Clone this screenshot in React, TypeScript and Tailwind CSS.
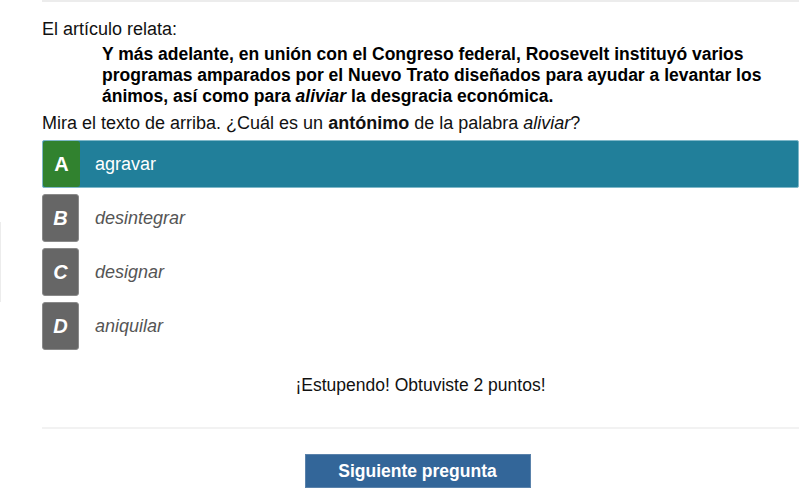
const options = [
  { letter: "A", text: "agravar", selected: true },
  { letter: "B", text: "desintegrar", selected: false },
  { letter: "C", text: "designar", selected: false },
  { letter: "D", text: "aniquilar", selected: false },
];

function Option({
  letter,
  text,
  selected,
}: {
  letter: string;
  text: string;
  selected: boolean;
}) {
  if (selected) {
    return (
      <div className="flex h-[48px] items-stretch rounded-[2px] border border-[#7fb8c9] bg-[#217f9a]">
        <div className="flex w-[37px] items-center justify-center rounded-[3px] bg-[#31822f] text-[20px] font-bold text-white">
          {letter}
        </div>
        <div className="flex items-center pl-[15px] text-[18px] text-white">
          {text}
        </div>
      </div>
    );
  }

  return (
    <div className="flex h-[48px] items-stretch">
      <div className="flex w-[37px] items-center justify-center rounded-[3px] border border-[#8a8a8a] bg-[#666666] text-[20px] font-bold italic text-white">
        {letter}
      </div>
      <div className="flex items-center pl-[16px] text-[18px] italic text-[#555555]">
        {text}
      </div>
    </div>
  );
}

export default function App() {
  return (
    <div className="relative h-[493px] w-[806px] overflow-hidden bg-white font-['Liberation_Sans',Arial,sans-serif] text-[#111111]">
      <div className="absolute left-0 top-[222px] h-[80px] w-px bg-[#ececec]" />

      <div className="ml-[42px] w-[757px]">
        <div className="h-[2px] bg-[#ececec]" />

        <p className="mt-[17px] text-[18px] leading-[20px]">
          El artículo relata:
        </p>

        <blockquote className="ml-[60px] mt-[5px] text-[17.5px] font-bold leading-[21px] text-black">
          Y más adelante, en unión con el Congreso federal, Roosevelt
          instituyó varios programas amparados por el Nuevo Trato diseñados
          para ayudar a levantar los ánimos, así como para{" "}
          <em>aliviar</em> la desgracia económica.
        </blockquote>

        <p className="mt-[6px] text-[18px] leading-[20px]">
          Mira el texto de arriba. ¿Cuál es un <b>antónimo</b> de la palabra{" "}
          <em>aliviar</em>?
        </p>

        <div className="mt-[7px] flex flex-col gap-[6px]">
          {options.map((o) => (
            <Option key={o.letter} {...o} />
          ))}
        </div>

        <p className="mt-[25px] text-center text-[17.5px] leading-[20px]">
          ¡Estupendo! Obtuviste 2 puntos!
        </p>

        <div className="mt-[32px] h-[2px] bg-[#f2f2f2]" />

        <div className="mt-[25px] flex justify-center pr-[6px]">
          <button className="h-[34px] w-[226px] border border-[#5a82ab] bg-[#336699] text-[17.5px] font-bold text-white">
            Siguiente pregunta
          </button>
        </div>
      </div>
    </div>
  );
}
